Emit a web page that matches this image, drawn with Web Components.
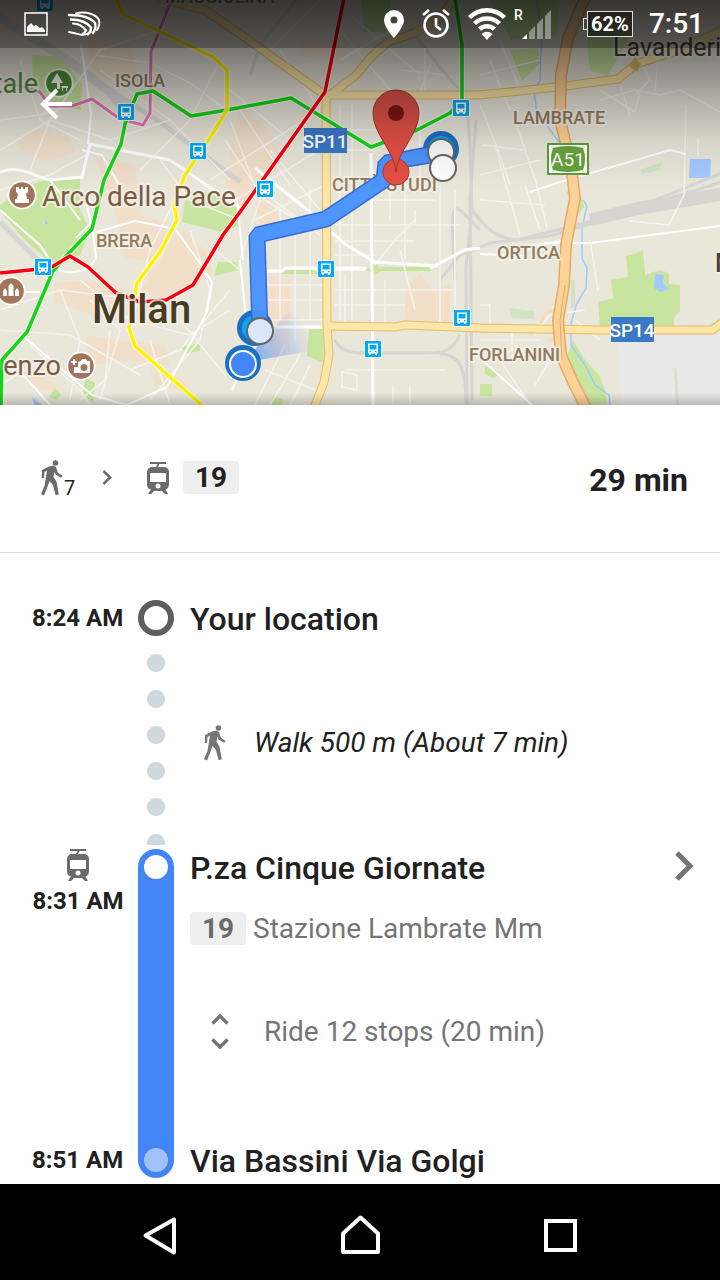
<!DOCTYPE html>
<html lang="en">
<head>
<meta charset="utf-8">
<meta name="viewport" content="width=device-width, initial-scale=1">
<title>Transit directions</title>
<style>
  html, body { margin: 0; }
  body { background: #fff; color: #212121; font-family: Roboto, "Noto Sans", sans-serif; }
</style>
</head>
<body>
<trip-screen></trip-screen>

<script>
const define = (name, html) => customElements.define(name, class extends HTMLElement {
  connectedCallback() {
    if (this.shadowRoot) return;
    const t = document.createElement('template');
    t.innerHTML = typeof html === 'function' ? html(this) : html;
    this.attachShadow({ mode: 'open' }).append(t.content.cloneNode(true));
  }
});

/* ---------- icons ---------- */
const icons = {
  photo: [24, 24, '<path d="M1 1h22v22H1z" fill="none" stroke="currentColor" stroke-width="1.5"/><path d="M3 20v-5l4-4 3 3 2-1 4 3 2-1 3 3v2z"/>'],
  swift: [34, 26, '<g fill="none" stroke="currentColor" stroke-linecap="round"><path stroke-width="2" d="M8 2.500C17 0 28 3 31 9c1 4 0 7-2 10"/><path stroke-width="2.400" d="M1 4c12 0 22 3 26 8 1 3 0 7-2 10"/><path stroke-width="2.400" d="M3 8.500c9 0 16 3 20 8 0 2-1 5-3 7"/><path stroke-width="2.200" d="M5 12.500c6 0 10 3 13 7-1 2-2 3-4 4"/><path stroke-width="1.800" d="M1 21c5 1 9 2 13 3 3 0 6-1 9-3"/></g>'],
  place: [20, 28, '<path fill-rule="evenodd" d="M10 0a10 10 0 0 0-10 10c0 7 10 18 10 18s10-11 10-18A10 10 0 0 0 10 0zm0 6.500a3.500 3.500 0 1 1 0 7 3.500 3.500 0 0 1 0-7z"/>'],
  alarm: [28, 30, '<g fill="none" stroke="currentColor" stroke-width="2.600"><circle cx="14" cy="16" r="11.500"/><path d="M14 9v8l5 4M1 6l6-5M27 6l-6-5"/></g>'],
  wifi: [38, 32, '<g fill="none" stroke="currentColor" stroke-width="4.500"><path d="M1.500 9.500a25 25 0 0 1 35 0"/><path d="M6.500 15.500a18 18 0 0 1 25 0"/><path d="M11.500 21.200a11 11 0 0 1 15 0"/></g><path d="M19 32l-5.500-6a8 8 0 0 1 11 0z"/>'],
  signal: [30, 30, '<path opacity=".4" d="M7 23l6-6v13H7zM15 15l6-6v21h-6zM23 7l6-6v29h-6z"/><path d="M0 30l5-5v5z"/>'],
  back: [34, 32, '<path fill="none" stroke="currentColor" stroke-width="4" d="M17 2L3 16l14 14M3 16h29"/>'],
  walk: [22, 36, '<circle cx="14.500" cy="3" r="2.800"/><path d="M8 6.500L12.500 5.500l2.500 1.500 1.800 5.500 4.700 3.500-1.200 1.800-5.800-3.200-1-3.200-1 5.600 3 4.500L17.800 34.500l-3.300.5-2.500-10-3.500-4-2.500 7L3 35.500 0 34l3.500-8L6 10.500 3.500 12l-.5 6H.8L1 10z"/>'],
  tram: [22, 32, '<path fill-rule="evenodd" d="M3 0h16v2h-6.500L11 5h5c4 0 6 2 6 5v12c0 3-1 4.500-3.500 5.500l2.500 4.500h-3l-3-3H7l-3 3H1l3-4.500C1 27 0 25 0 22V10c0-3 2-5 6-5h3l1.500-3H3zM3 11v9h16v-9zm8 10.500a2.500 2.500 0 1 0 0 5 2.500 2.500 0 0 0 0-5z"/>'],
  next: [10, 16, '<path fill="none" stroke="currentColor" stroke-width="2.500" d="M1.500 1L8 7.500 1.500 14"/>'],
  open: [20, 30, '<path fill="none" stroke="currentColor" stroke-width="5" d="M3 1l13 13L3 27"/>'],
  unfold: [18, 36, '<path fill="none" stroke="currentColor" stroke-width="3.500" d="M1.500 9.500L9 2l7.500 7.500M1.500 25.500L9 33l7.500-7.500"/>'],
  navback: [48, 48, '<path fill="none" stroke="currentColor" stroke-width="4" stroke-linejoin="round" d="M38 11.500v33L9.500 27.500z"/>'],
  navhome: [48, 48, '<path fill="none" stroke="currentColor" stroke-width="4" stroke-linejoin="round" d="M7 25.500L24.500 9.500l17.500 16V44H7z"/>'],
  navrecent: [48, 48, '<path fill="none" stroke="currentColor" stroke-width="4" d="M10 13h29v29H10z"/>']
};
define('ui-icon', el => {
  const [w, h, body] = icons[el.getAttribute('name')];
  return `<style>:host{display:block;flex:none;width:${w}px;height:${h}px}svg{display:block;overflow:visible}</style>
  <svg width="${w}" height="${h}" viewBox="0 0 ${w} ${h}" fill="currentColor" aria-hidden="true">${body}</svg>`;
});

/* ---------- status bar ---------- */
define('status-bar', `
<style>
  :host { display: flex; align-items: center; height: 48px; box-sizing: border-box; padding: 0 16px 0 24px; background: rgba(0,0,0,.28); color: #fff; }
  .left { display: flex; align-items: center; gap: 20px; flex: 1; }
  .right { display: flex; align-items: center; gap: 16px; }
  .icons { display: flex; align-items: center; gap: 18px; }
  .cell { display: flex; align-items: flex-start; margin-left: -8px; }
  .roam { font-size: 14px; line-height: 12px; font-weight: 500; width: 8px; }
  .battery { position: relative; box-sizing: border-box; width: 46px; height: 26px; margin-left: 19px; border: 1px solid #ddd; background: rgba(0,0,0,.45); font-size: 20px; line-height: 25px; font-weight: 700; text-align: center; }
  .battery::before { content: ""; position: absolute; left: -5px; top: 6px; width: 4px; height: 10px; border: 1px solid #ddd; border-right: 0; }
  time { font-size: 28px; line-height: 48px; font-weight: 500; }
</style>
<div class="left"><ui-icon name="photo"></ui-icon><ui-icon name="swift"></ui-icon></div>
<div class="right">
  <div class="icons"><ui-icon name="place"></ui-icon><ui-icon name="alarm"></ui-icon><ui-icon name="wifi"></ui-icon></div>
  <div class="cell"><span class="roam">R</span><ui-icon name="signal"></ui-icon></div>
  <span class="battery">62%</span><time>7:51</time>
</div>`);

/* ---------- map ---------- */
const bus = (x, y) => `<g transform="translate(${x} ${y})"><rect x="-9" y="-9" width="18" height="18" rx="1.500" fill="#e8f4fa"/><rect x="-8" y="-8" width="16" height="16" rx="1" fill="#03a9f4"/><path fill="#fff" fill-rule="evenodd" d="M-5-5.500h10v10h-1v1.500h-2V4.500h-4V6h-2V4.500h-1zM-3.500-4v4.500h7V-4zM-3.500 2v1.200h1.500V2zM2 2v1.200h1.500V2z"/></g>`;
const poi = (x, y, c, g) => `<g transform="translate(${x} ${y})"><circle r="14.500" fill="#fff"/><circle r="12.800" fill="${c}"/><g fill="#fff">${g}</g></g>`;
const line = (d, c, w = 3.5) => `<path d="${d}" stroke="#fff" stroke-opacity=".65" stroke-width="${w + 2}"/><path d="${d}" stroke="${c}" stroke-width="${w}"/>`;
const road = (d, a, b, w) => `<path d="${d}" stroke="${a}" stroke-width="${w}"/><path d="${d}" stroke="${b}" stroke-width="${w - 3}"/>`;
const yellowRoads = ['M158-2L205 10 240 34 325 95', 'M330 95L355 76 372 56 388 42 415 33 440 18 455-2', 'M326 95H478L520 91 565 86 618 79 636 64 680 50 722 30', 'M326 95L327 325 329 355 324 382 314 408', 'M327 326L395 327 405 325 480 328 600 330 712 330 722 323'];
const highway = 'M585-2L568 38 561 75 560 120 571 165 575 198 566 245 564 285 558 320 561 355 573 382 586 408';
const route = 'M441 153L412 158 386 163 384 180 326 219 257 235 260 332';

define('route-map', `
<style>
  :host { display: block; position: relative; aspect-ratio: 16 / 9; overflow: hidden; background: #e9e6da; }
  svg { display: block; width: 100%; height: 100%; }
  text { font-family: Roboto, "Noto Sans", sans-serif; paint-order: stroke; stroke: #f3f1e9; stroke-width: 4px; stroke-opacity: .75; stroke-linejoin: round; }
  .area { font-size: 18px; font-weight: 500; fill: #927b5c; }
  .poi { font-size: 28px; fill: #7b5b46; }
  .small { font-size: 27px; }
  .city { font-size: 40px; font-weight: 500; fill: #473d24; }
  .town { font-size: 25px; fill: #4a4230; }
  .sign { font-size: 19px; font-weight: 500; fill: #fff; stroke: none; }
  ::slotted(*) { position: absolute; }
  ::slotted(status-bar) { inset: 0 0 auto 0; }
  ::slotted(a) { left: 40px; top: 88px; color: #fff; }
</style>
<svg viewBox="0 0 720 405" preserveAspectRatio="xMidYMid slice" role="img" aria-label="Map of Milan with the route">
  <defs>
    <linearGradient id="scrim" x1="0" y1="0" x2="0" y2="1"><stop offset="0" stop-opacity=".68"/><stop offset=".25" stop-opacity=".49"/><stop offset=".53" stop-opacity=".24"/><stop offset=".76" stop-opacity=".07"/><stop offset="1" stop-opacity="0"/></linearGradient>
    <linearGradient id="edge" x1="0" y1="0" x2="0" y2="1"><stop offset="0" stop-opacity="0"/><stop offset="1" stop-opacity=".2"/></linearGradient>
    <radialGradient id="beam" gradientUnits="userSpaceOnUse" cx="243" cy="363" r="72"><stop offset="0" stop-color="#4285f4" stop-opacity=".7"/><stop offset="1" stop-color="#4285f4" stop-opacity="0"/></radialGradient>
    <linearGradient id="pin" x1="0" y1="0" x2="0" y2="1"><stop offset="0" stop-color="#d9534a"/><stop offset="1" stop-color="#ea4d40"/></linearGradient>
  </defs>
  <rect width="720" height="405" fill="#e9e6da"/>
  <!-- built-up blocks -->
  <g fill="#f1dfca">
    <path d="M85 35l45 5 8 45-45-8zM15 145l20-15 35 8 5 15-30 8zM95 155l40 10 5 50 28 8-12 40-30-5-12-50zM180 228l25 22 8 22-20 18-35 12-18-12 20-30zM240 105l28 25 15 30-28 35-20 25-10-40zM55 283l30-3 50 12 30 20-15 15-50-10-45-15zM85 335l30 5 50 5 5 20-40-5-40 5zM268 276l22 4v70l-15 12-8-30zM405 288l15-14 12 15 18-4v40h-45zM300 38l50 10-10 15-40-8zM0 10l25 10 15 20-40-10zM150 372l30 3 10 16-35-5zM255 200l20 5 3 18-18 3zM10 368l35 10 25 15-30-4z"/>
  </g>
  <!-- parks and water -->
  <g fill="#c8e5a0">
    <path d="M32 55l30 2 20 28-1 25-30-6-18-22zM0 205l20-14 20-10 40-3v32l10 20-10 25-28 9-28-25-24-28zM185 200l20-8 35 13v20l-18 7-40-10zM218 262l18 0 3 8-25 6zM180 347l20-4 0 8-12 2zM361 0h30v32h-27zM490 0l70 0-4 35-45 5zM585 20l43 20-20 35-18-4zM510 50l28-2 2 15-18 18zM309 329l17 0-2 34-17-7zM282 270h36v4h-36zM381 267h50v4h-50zM366 270l10-7 6 7-6 5zM600 326L598 302l15-4-2-18 17-3-2-21 8-2 9-4 2 25 15-5 9 3v11l11 1v26l-6 7v9zM573 340l12 20 14 15 6 15 2 14-22 3-22-40zM485 365l16 8-8 5-8-4zM480 384h12v12h-12zM55 388l6 6-4 6-8-3zM85 378l10 5-2 20-10-8zM274 395l10 6-6 8h-10zM566 190l14 5 4 12-8 10z"/>
    <path fill="#d1e3c4" d="M509 308l25 3v8l-22-1zM571 280h4v28h-4zM640 170l22-8-2 8-18 4z"/>
  </g>
  <g fill="#a3caff"><path d="M690 159h21l-1 19h-21zM655 274l9 1-1 8 6 6-9 3-6-4zM45 220l4 3-4 2zM32 397l10 8h-8z"/></g>
  <path fill="#e8e8e8" d="M618 334h104v74H622z"/><path stroke="#dcdbd5" stroke-width="3" d="M675 368l3 40"/>
  <g fill="none" stroke="#a3caff" stroke-width="1.500"><path d="M536 0l6 25-2 55-6 12 3 20 22 30M583 200l4 6-5 22v30l5 10-1 20-9 15-6 20v22l14 20 10 20 14 10 2 18 8 14"/></g>
  <!-- railways -->
  <g fill="none" stroke="#d6d5d1" stroke-width="3">
    <path stroke-width="9" d="M-5 14L65 58 110 92 128 115"/><path stroke-width="5" d="M110 90L160 122 240 182M0 222l52 52"/>
    <path d="M410 28l30 40 27 30 3 50 2 60-6 60 1 140M476 120l-6 80 2 200M480 230c-30-30-30-40-25 50M335 340c5 10 14 13 30 13h50c25 0 35 2 45-18M440 354c20 0 26 15 26 50M300-5l-40 50-10 30M472 210c15 20 25 28 45 30l80-20 125-38"/>
    <path stroke-width="13" d="M590 220l50-12 82-14"/><path stroke-width="3" d="M440 280l20-25 30-12 60-7 60-18 112-45"/>
  </g>
  <!-- minor streets -->
  <g fill="none" stroke="#f6f4ee" stroke-width="1.500">
    <path d="M0 120l40-5 50-15M20 60l20 60 40 20M0 150l50-30 60 20 60-20M30 170l20-50 50-70 60-20M95 55l55 8 40 20 40 30M100 70l70 50 60 60M140 170l50-50 30-60M0 190l50-15 40-22M160 160l30 40 50 20M180 190l-30 60-20 80M190 230l20 60-10 50-50 60M80 280l50 40 60 15 40-25M60 290l20 50-10 60M90 300l30 30-20 70M0 310l60-20 80 10M0 330l70 5 70 40M30 345l50 45 10 15M150 340l20 65M110 330l-5 50-25 20M130 370l50-20 50-60M180 320l45 55M0 385l50-30M215 250l25 20M230 120l30 80-20 60M230 90l60 50 35-40M225 140l40 60 40 25M240 110l50 75M260 190l60 45M270 150l50 60M210 180l110-70M235 200l85-50M255 220l70-35"/>
    <path d="M340 105v215M352 105v215M390 100v120M405 110v150M420 105v85M440 185v140M455 190v120M415 210v15h45M340 130h45M340 150h40M335 200h100M335 225h118M335 241h80M335 255h40M395 240l15-15h30v30M375 265l20-25 20-20M335 290h120M335 305h70M345 275v50M385 280v45M400 250l15 60M265 285h60M268 300h58M270 320h55M280 210v110M295 225v115M310 190v130M285 345l-30 60M300 355l-30 50M265 370l50 20M310 365l-20 40M345 370h100M393 385v20M410 385v20M342 372v15l15 3v-15zM340 60l60-35M340 30l50 60M350 15l70 60M280 50l40 60M260 60l60-60M430 65l-20 55M400 70l45 5M425 48v50"/>
    <path d="M480 105l20 50 10 30M483 145l40 5M495 145l25 90M480 175l60-15M515 120l20 60M490 60l20 50M480 75l60-15M500 40l20 50M525 185l15 45M535 178l12 50M480 200l65 5M500 360l30 45M515 345l35 20M480 340h60M512 330v20l-20 10M550 360l-15 25M565 290l-20 30M480 305h10v25M590 240l8 50M600 100l35-10 25 5 20-5 40 22M660 40l-5 50M640 60l10 20-15 15M620 85l10 30M686 105l-2 90-15 30-40-4M600 90l35 22 5-20M535 335l15-20 35-5M575 320l25 20M698 138v18"/>
  </g>
  <g fill="none" stroke="#fff" stroke-width="3">
    <path d="M0 172c20-8 35 5 50 8l32-3 8-33 80 16 70 48M371 153l2 252M267 271h15l4-3h80M375 262l-30-18-40-36-50-40M430 268l35-18 15-2M373 262l65 4M315 269h50M275 327h50"/>
    <path stroke-width="2" d="M88 144l3-30-10-70M50 180l30 40M240 260l6 60M237 200l6 60M232 390l15-35M82 150l20 5 20 35M0 210l40 35 14 21c10 10 35 8 42-8l-3-25 42-12 40 8 22 30 15 23-5 30-40 75-40 18-35-10-70-60M0 292h40M10 360l40 45M76 238l15-15-5-20M545 243l45 0 130-17M480 254l45 2 5-10 40-6M530 192l30-10 110-32 16 4M482 360l50 45"/>
  </g>
  <!-- trunk roads -->
  <g fill="none" stroke-linejoin="round">
    ${yellowRoads.map(d => `<path d="${d}" stroke="#e0bd6b" stroke-width="9"/>`).join('')}
    ${yellowRoads.map(d => `<path d="${d}" stroke="#fde6a8" stroke-width="7"/>`).join('')}
    <path d="M540 325c5-15 15-15 20-18M548 340c15 0 20-25 15-50" stroke="#f8dcb0" stroke-width="3"/>
    ${road(highway, '#e4ab68', '#fdd297', 12)}<path d="M565 285l-5 35 2 40" stroke="#e4ab68"/>
    <path d="M635 57l6 7-4 8-8-6z" fill="#e0bd6b"/>
    <!-- metro lines -->
    ${line('M172-2L151 52 150 113 143 125 120 119 92 99 72 106 50 106 40 92 0 80', '#e878b0', 3)}
    ${line('M455-2L462 45 462 100 450 113 413 132 371 147 291 98 227 110 191 116 153 91 137 94 125 124 121 144 104 180 92 229 68 254 53 271 27 332 2 360 1 407', '#17d417')}
    ${line('M116-2L123 14 213 57 227 70 227 110 208 141 185 175 174 205 177 220 160 252 137 283 129 328 135 346 204 407', '#fff200')}
    ${line('M344-2L325 92 240 212 223 235 193 285 166 300 140 302 116 293 88 267 70 256 50 268 0 273', '#f8000f')}
  </g>
  ${[[45, 3], [126, 112], [198, 151], [265, 189], [461, 108], [43, 267], [326, 269], [462, 318], [373, 349]].map(p => bus(...p)).join('')}
  ${poi(59, 83, '#508e3c', '<path d="M-2-10l6 10H1v6h-3V0h-6zM2 3h7v2H8v3H7V5H4v3H3V5z"/>')}
  ${poi(22, 195, '#a2755a', '<path d="M-6-8h3v2h2v-2h2v2h2v-2h3v5l-2 2 1 5h2v4H-7V4h2l1-5-2-2z"/>')}
  ${poi(11, 291, '#a2755a', '<path d="M-8 5V0l2-3 2 3v5zM-2.500 5v-10L0-8l2.500 3V5zM4 5V0l2-3 2 3v5z"/>')}
  ${poi(81, 366, '#a2755a', '<path fill-rule="evenodd" d="M-8-7h2v2h2v2h-2v2h-2v-2h-2v-2h2zM-3-4L0-5l1-2h4l1 2h3V7H-7V1h4zM3-2a3.500 3.500 0 1 0 0 7 3.500 3.500 0 0 0 0-7z"/>')}
  <!-- labels -->
  <text class="area" x="165" y="3">MAGGIOLINA</text>
  <text class="area" x="115" y="87">ISOLA</text>
  <text class="area" x="96" y="247">BRERA</text>
  <text class="area" x="513" y="124">LAMBRATE</text>
  <text class="area" x="332" y="191">CITTÀ STUDI</text>
  <text class="area" x="497" y="259">ORTICA</text>
  <text class="area" x="469" y="361">FORLANINI</text>
  <text class="poi small" x="38" y="93" text-anchor="end" style="fill:#4f8a3a">tale</text>
  <text class="poi" x="42" y="206">Arco della Pace</text>
  <text class="poi small" x="61" y="375" text-anchor="end">enzo</text>
  <text class="city" x="92" y="323">Milan</text>
  <text class="town" x="613" y="56">Lavanderie</text>
  <text class="town" x="715" y="272" style="font-weight:500">M</text>
  <path fill="#3a78c8" d="M304 128h43v25h-43zM611 317h43v25h-43z"/>
  <text class="sign" x="325" y="148" text-anchor="middle">SP11</text>
  <text class="sign" x="632" y="337" text-anchor="middle">SP14</text>
  <rect x="548" y="144" width="40" height="30" fill="#fff" stroke="#5f9e3c" stroke-width="2"/><path fill="#68a43d" d="M553 148q15-4 30 0 4 11 0 22-15 4-30 0-4-11 0-22z"/>
  <text class="sign" x="568" y="166" text-anchor="middle" style="font-weight:400">A51</text>
  <!-- route -->
  <path fill="url(#beam)" d="M243 363l78-14-16-56z"/>
  <circle cx="441" cy="149" r="18" fill="#1c6fc0"/><circle cx="441" cy="149" r="13" fill="#03a9f4"/>
  <circle cx="255" cy="328" r="18" fill="#1c6fc0"/><circle cx="255" cy="328" r="13" fill="#03a9f4"/>
  <g fill="none" stroke-linejoin="bevel" opacity=".97"><path d="${route}" stroke="#3367d6" stroke-width="17"/><path d="${route}" stroke="#4993ff" stroke-width="14"/></g>
  <g stroke="#666" stroke-width="2"><circle cx="441" cy="152" r="13" fill="#fafafa"/><circle cx="443" cy="168" r="13" fill="#fff"/><circle cx="260" cy="331" r="13" fill="#dbe6fb"/></g>
  <circle cx="243" cy="363" r="18" fill="#1c6fc0"/><circle cx="243" cy="364" r="13" fill="#4285f4" stroke="#fff" stroke-width="2"/>
  <circle cx="396" cy="172" r="13" fill="#e65043" stroke="#b0362e"/>
  <path fill="url(#pin)" stroke="#a8352e" d="M396 172c-2-22-23-38-23-59a23 23 0 0 1 46 0c0 21-21 37-23 59z"/>
  <circle cx="396" cy="113" r="8" fill="#7b1812"/>
  <rect width="720" height="190" fill="url(#scrim)"/>
  <rect y="393" width="720" height="12" fill="url(#edge)"/>
</svg>
<slot></slot>`);

/* ---------- route badge ---------- */
define('line-badge', `
<style>
  :host { display: block; flex: none; width: 56px; height: 33px; border-radius: 4px; background: #eee; font-size: 28px; line-height: 33px; font-weight: 700; text-align: center; }
</style><slot></slot>`);

/* ---------- trip summary ---------- */
define('trip-summary', `
<style>
  :host { display: flex; align-items: center; height: 148px; box-sizing: border-box; padding: 0 32px 2px 41px; border-bottom: 1px solid #dcdcdc; }
  .modes { display: flex; align-items: center; flex: 1; color: #6b6b6b; }
  .walk { display: flex; align-items: flex-end; width: 61px; }
  .walk span { font-size: 20px; line-height: 16px; color: #212121; margin-left: 1px; }
  .next { width: 45px; }
  .tram { width: 36px; }
  line-badge { color: #212121; }
  strong { font-size: 32px; line-height: 40px; font-weight: 700; padding-top: 4px; }
</style>
<div class="modes">
  <div class="walk"><ui-icon name="walk"></ui-icon><span>7</span></div>
  <div class="next"><ui-icon name="next"></ui-icon></div>
  <div class="tram"><ui-icon name="tram"></ui-icon></div>
  <line-badge>19</line-badge>
</div>
<strong>29 min</strong>`);

/* ---------- one leg of the trip: times, rail, details ---------- */
define('trip-leg', el => `
<style>
  :host { display: grid; grid-template-columns: 106px 36px 1fr; min-height: 249px; }
  .times { display: flex; flex-direction: column; justify-content: space-between; width: 92px; }
  .rail { display: flex; flex-direction: column; }
  .ring { box-sizing: border-box; height: 36px; border: 6px solid #5e5e5e; border-radius: 50%; }
  .dots { flex: 1; margin: 9px 0 4px; background: radial-gradient(circle, #cfd8dd 8.500px, transparent 9.500px) 0 0 / 36px 36px; }
  .bar { flex: 1; box-sizing: border-box; display: flex; flex-direction: column; justify-content: space-between; padding: 6px; border-radius: 18px; background: #4285f4; }
  .bar i { height: 24px; border-radius: 50%; background: #fff; }
  .bar i + i { opacity: .5; }
  .details { display: flex; flex-direction: column; padding-left: 16px; }
</style>
<div class="times"><slot name="start"></slot><slot name="end"></slot></div>
<div class="rail">${el.getAttribute('mode') === 'walk' ? '<div class="ring"></div><div class="dots"></div>' : '<div class="bar"><i></i><i></i></div>'}</div>
<div class="details"><slot></slot></div>`);

/* ---------- itinerary ---------- */
define('trip-itinerary', `
<style>
  :host { display: block; padding: 47px 26px 6px 32px; }
  time { display: block; font-size: 24px; line-height: 36px; font-weight: 700; white-space: nowrap; }
  .board { display: flex; flex-direction: column; align-items: center; gap: 2px; color: #6b6b6b; }
  .board time { color: #212121; }
  h2 { margin: 0; font-size: 32px; line-height: 38px; height: 36px; font-weight: 500; }
  .stop { display: flex; align-items: center; justify-content: space-between; color: inherit; text-decoration: none; }
  .stop ui-icon { color: #757575; }
  .walk { display: flex; align-items: center; margin: 88px 0 0; padding-left: 14px; gap: 28px; font-size: 28px; line-height: 38px; font-style: italic; }
  .walk ui-icon, .line, .ride { color: #757575; }
  .line { display: flex; align-items: center; gap: 7px; margin: 27px 0 69px; font-size: 28px; line-height: 33px; }
  .line line-badge { color: #6b6b6b; }
  .ride { display: flex; align-items: center; gap: 35px; margin: 0 0 92px; padding: 0 0 0 21px; border: 0; background: none; font: 28px/36px Roboto, "Noto Sans", sans-serif; text-align: left; }
</style>
<trip-leg mode="walk">
  <time slot="start">8:24 AM</time>
  <h2>Your location</h2>
  <p class="walk"><ui-icon name="walk"></ui-icon>Walk 500 m (About 7 min)</p>
</trip-leg>
<trip-leg mode="tram">
  <div slot="start" class="board"><ui-icon name="tram"></ui-icon><time>8:31 AM</time></div>
  <time slot="end">8:51 AM</time>
  <a class="stop" href="#stop"><h2>P.za Cinque Giornate</h2><ui-icon name="open"></ui-icon></a>
  <div class="line"><line-badge>19</line-badge>Stazione Lambrate Mm</div>
  <button class="ride"><ui-icon name="unfold"></ui-icon>Ride 12 stops (20 min)</button>
  <h2>Via Bassini Via Golgi</h2>
</trip-leg>`);

/* ---------- system navigation ---------- */
define('nav-bar', `
<style>
  :host { display: grid; grid-template-columns: repeat(3, 1fr); height: 96px; box-sizing: border-box; padding: 0 60px; background: #000; }
  button { display: grid; place-items: center; padding: 0; border: 0; background: none; color: #fff; }
</style>
<button aria-label="Back"><ui-icon name="navback"></ui-icon></button>
<button aria-label="Home"><ui-icon name="navhome"></ui-icon></button>
<button aria-label="Recent apps"><ui-icon name="navrecent"></ui-icon></button>`);

define('trip-screen', `
<style>
  :host { display: flex; flex-direction: column; min-height: 100vh; }
  main { flex: 1; }
  nav-bar { position: sticky; bottom: 0; }
</style>
<main>
  <route-map><status-bar></status-bar><a href="#back" aria-label="Back"><ui-icon name="back"></ui-icon></a></route-map>
  <trip-summary></trip-summary>
  <trip-itinerary></trip-itinerary>
</main>
<nav-bar></nav-bar>`);
</script>
</body>
</html>
